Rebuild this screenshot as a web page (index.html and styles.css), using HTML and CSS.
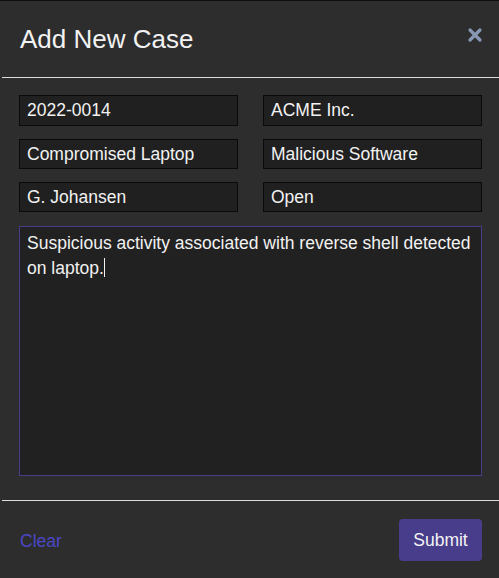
FILE: index.html
```html
<!DOCTYPE html>
<html lang="en">
<head>
<meta charset="utf-8">
<title>Add New Case</title>
<link rel="stylesheet" href="styles.css">
</head>
<body>
<div class="modal">
  <header class="modal-header">
    <h1 class="modal-title">Add New Case</h1>
    <button class="close" aria-label="Close">
      <svg width="16" height="16" viewBox="0 0 16 16"><path d="M3 3 L13 13 M13 3 L3 13" stroke="#8898b4" stroke-width="3.2" stroke-linecap="round" fill="none"/></svg>
    </button>
  </header>
  <hr class="rule">
  <div class="modal-body">
    <div class="field">2022-0014</div>
    <div class="field">ACME Inc.</div>
    <div class="field">Compromised Laptop</div>
    <div class="field">Malicious Software</div>
    <div class="field">G. Johansen</div>
    <div class="field">Open</div>
    <div class="field area">Suspicious activity associated with reverse shell detected on laptop.<span class="caret"></span></div>
  </div>
  <hr class="rule">
  <footer class="modal-footer">
    <a class="clear" href="#">Clear</a>
    <button class="submit">Submit</button>
  </footer>
</div>
</body>
</html>
```
FILE: styles.css
```css
html, body {
  margin: 0;
  padding: 0;
  background: #2d2d2d;
}
body {
  font-family: "Liberation Sans", Arial, sans-serif;
  color: #f2f2f2;
  width: 499px;
  height: 578px;
  overflow: hidden;
}
.modal {
  border-top: 1px solid #0e0e0e;
  height: 577px;
}
.modal-header {
  display: flex;
  justify-content: space-between;
  align-items: flex-start;
  height: 76px;
  box-sizing: border-box;
  padding: 25px 15px 0 20px;
}
.modal-title {
  margin: 0;
  font-size: 26px;
  font-weight: normal;
  line-height: 1;
  color: #f2f2f2;
}
.close {
  background: none;
  border: 0;
  padding: 0;
  margin: 0;
  width: 18px;
  height: 18px;
  display: flex;
  align-items: center;
  justify-content: center;
  cursor: pointer;
}
.rule {
  margin: 0 0 0 2px;
  border: 0;
  height: 1px;
  background: #dcdcdc;
}
.modal-body {
  display: grid;
  grid-template-columns: 219px 219px;
  column-gap: 25px;
  row-gap: 13px;
  padding: 17px 17px 24px 19px;
}
.field {
  box-sizing: border-box;
  height: 31px;
  border: 1px solid #0a0a0a;
  background: #202020;
  font-size: 17.5px;
  line-height: 29px;
  padding: 0 7px;
  color: #f2f2f2;
  white-space: nowrap;
}
.field:nth-child(n+3) {
  height: 30px;
  line-height: 28px;
}
.field.area {
  grid-column: 1 / span 2;
  height: 250px;
  border-color: #483d8b;
  background: #212121;
  line-height: 25px;
  padding: 4px 7px;
  white-space: normal;
  margin-top: 1px;
}
.caret {
  display: inline-block;
  width: 1px;
  height: 19px;
  background: #f2f2f2;
  vertical-align: -3px;
}
.modal-footer {
  display: flex;
  justify-content: space-between;
  align-items: center;
  padding: 18px 17px 0 20px;
}
.clear {
  color: #4b47c6;
  text-decoration: none;
  font-size: 17.5px;
  margin-top: 3px;
}
.submit {
  width: 83px;
  height: 42px;
  background: #483d8b;
  border: 0;
  border-radius: 4px;
  color: #f4f4f4;
  font-family: "Liberation Sans", Arial, sans-serif;
  font-size: 17.5px;
  padding: 0;
}
```
